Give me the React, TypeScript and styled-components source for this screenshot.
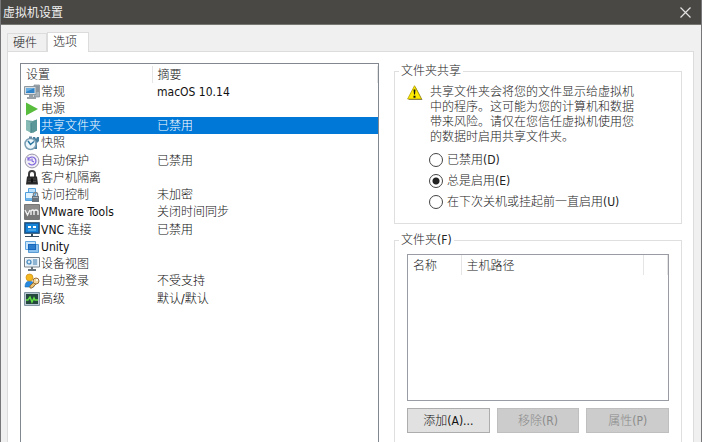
import React from "react";
import styled, { createGlobalStyle } from "styled-components";

const GlobalStyle = createGlobalStyle`
  * { box-sizing: border-box; }
  body {
    margin: 0;
    overflow: hidden;
    background: #f0f0f0;
    color: #222;
    font-family: "DejaVu Sans Condensed", "Noto Sans CJK SC", sans-serif;
    font-size: 12px;
    font-weight: 300;
    line-height: 16px;
  }
  button, input { font: inherit; }
`;

const Window = styled.div`
  display: flex;
  flex-direction: column;
  height: 100vh;
  border: 0 solid #77777a;
  border-right-width: 1px;
  border-left-width: 1px;
  overflow: hidden;
`;

const TitleBar = styled.header`
  display: flex;
  flex: none;
  align-items: center;
  justify-content: space-between;
  height: 25px;
  margin: 0 -1px;
  padding: 1px 10px 0 3px;
  border-bottom: 1px solid #777672;
  background: #4a4845;
  color: #f0f0f0;
`;

const Title = styled.h1`
  margin: 0;
  font-size: 12px;
  font-weight: 400;
`;

const CloseButton = styled.button`
  display: flex;
  padding: 0;
  border: 0;
  background: none;
  color: #e2e2e2;
`;

const Content = styled.main`
  display: flex;
  flex: 1;
  flex-direction: column;
  min-height: 0;
  padding: 7px 7px 0 6px;
`;

const TabList = styled.div`
  display: flex;
  flex: none;
  align-items: flex-end;
  height: 20px;
  margin-bottom: -1px;
  z-index: 1;
`;

const Tab = styled.button<{ $active?: boolean }>`
  height: ${(p) => (p.$active ? 20 : 18)}px;
  width: ${(p) => (p.$active ? 42 : 40)}px;
  margin-bottom: ${(p) => (p.$active ? 0 : 1)}px;
  padding: 0 0 ${(p) => (p.$active ? 2 : 0)}px 5px;
  border: 1px solid #dcdcdc;
  border-bottom: 0;
  background: ${(p) => (p.$active ? "#fff" : "#f0f0f0")};
  color: #222;
  line-height: 16px;
  text-align: left;
`;

const TabPanel = styled.section`
  display: grid;
  flex: 1;
  grid-template-columns: 359fr 288fr;
  column-gap: 15px;
  min-height: 0;
  padding: 11px 11px 0 12px;
  border: 1px solid #dcdcdc;
  border-bottom: 0;
  background: #fff;
`;

const ListBox = styled.div`
  border: 1px solid #828790;
  border-bottom: 0;
  padding: 2px 0 0 3px;
`;

const Table = styled.table`
  width: 100%;
  border-collapse: collapse;
  table-layout: fixed;
`;

const IconCol = styled.col`
  width: 16px;
`;

const NameCol = styled.col`
  width: 112px;
`;

const Heading = styled.th<{ $inset: number; $tall?: boolean }>`
  height: ${(p) => (p.$tall ? 20 : 17)}px;
  padding: ${(p) => (p.$tall ? 2 : 0)}px 0 0 ${(p) => p.$inset}px;
  border-right: 1px solid #e5e5e5;
  font-weight: 300;
  text-align: left;
`;

const SettingRow = styled.tr<{ $selected?: boolean }>`
  height: 17px;
  &:nth-child(4n) { height: 18px; }
  td:not(:first-child) {
    background: ${(p) => (p.$selected ? "#0078d7" : "transparent")};
    color: ${(p) => (p.$selected ? "#fff" : "#111")};
  }
`;

const Cell = styled.td<{ $inset?: number }>`
  padding: 0 0 0 ${(p) => p.$inset ?? 0}px;
  line-height: 16px;
  white-space: nowrap;
`;

const Icon = styled.svg`
  display: block;
  width: 16px;
  height: 16px;
`;

const Side = styled.div`
  display: flex;
  flex-direction: column;
  gap: 8px;
  min-height: 0;
  overflow: hidden;
`;

const Group = styled.fieldset<{ $fill?: boolean }>`
  flex: ${(p) => (p.$fill ? "1" : "none")};
  min-width: 0;
  margin: 0;
  padding: 6px 12px ${(p) => (p.$fill ? 0 : 13)}px;
  border: 1px solid #dfdfdf;
  border-bottom-width: ${(p) => (p.$fill ? 0 : 1)}px;
`;

const Legend = styled.legend`
  margin-left: -8px;
  padding: 0 2px;
`;

const Notice = styled.div`
  display: flex;
  gap: 7px;
  margin-right: 35px;
`;

const WarningIcon = styled(Icon)`
  flex: none;
`;

const NoticeText = styled.p`
  margin: 0;
  line-height: 15px;
`;

const RadioList = styled.div`
  display: flex;
  flex-direction: column;
  gap: 5px;
  margin: 7px 0 0 22px;
`;

const RadioLabel = styled.label`
  display: flex;
  align-items: center;
  gap: 4px;
`;

const Radio = styled.input`
  appearance: none;
  width: 14px;
  height: 14px;
  margin: 0;
  border: 1px solid #444;
  border-radius: 50%;
  background: #fff;
  &:checked {
    background: radial-gradient(circle, #222 3px, #fff 4px);
  }
`;

const FolderBox = styled.div`
  height: 147px;
  border: 1px solid #9a9ca3;
`;

const FolderNameCol = styled.col`
  width: 53px;
`;

const SpareCol = styled.col`
  width: 24px;
`;

const ButtonRow = styled.div`
  display: grid;
  grid-template-columns: repeat(3, 1fr);
  gap: 7px;
  margin-top: 7px;
`;

const PushButton = styled.button`
  height: 25px;
  padding: 0;
  border: 1px solid #adadad;
  background: #e1e1e1;
  color: #111;
  &:disabled {
    border-color: #bfbfbf;
    background: #ccc;
    color: #8a8a8a;
  }
`;

const icons: Record<string, React.ReactNode> = {
  general: (
    <>
      <path d="M10 1h5.500v12H10z" fill="#aab2ba" stroke="#7d858c" strokeWidth=".7" />
      <path d="M11 3h4M11 5h4M11 7h4" stroke="#626c75" strokeWidth=".8" />
      <path d="M.5 2.500h11.500v8H.5z" fill="#d7dde2" stroke="#8e999f" />
      <path d="M2 4h8.500v5H2z" fill="#2f83c9" />
      <path d="M2 4h8.500L2 8z" fill="#68aee0" />
      <path d="M5 11h4v2h3v2H3v-2h2z" fill="#989fa5" />
    </>
  ),
  power: <path d="M2 1.500 14 8 2 14.500z" fill="#58bd3d" />,
  folder: (
    <>
      <path d="m2 2 7 1 4-1.500v11L9 15 2 12z" fill="#6fa7a6" />
      <path d="m2 2 5 3v10l-5-3z" fill="#87bbb5" />
      <path d="m7 5 2-2 4-1.500v11L7 15z" fill="#5b9698" />
      <path d="M7 5v10" stroke="#47838a" />
    </>
  ),
  snapshot: (
    <>
      <path d="M9 2h2l1 2 1-2h2v4l-2 2v6h-3V8L8 6z" fill="#477f9e" />
      <circle cx="6.500" cy="9" r="5.500" fill="#edf6fb" stroke="#7a9eb3" strokeWidth="1.500" />
      <path d="m4 6 2.500 3.500L10 6.500" fill="none" stroke="#28759f" strokeWidth="1.500" />
      <path d="M5 1.500h3v2H5z" fill="#6688a0" />
    </>
  ),
  autoprotect: (
    <>
      <circle cx="8" cy="8" r="6.900" fill="#f0eff6" stroke="#9994a9" />
      <path d="M4.500 6A4 4 0 1 1 4.500 10M4 4v3h3M8 5.500V8l2 1" fill="none" stroke="#8065dc" strokeWidth="1.200" />
    </>
  ),
  isolation: (
    <>
      <path d="M5 7V4a3 3 0 0 1 6 0v3" fill="none" stroke="#3c3c3c" strokeWidth="2" />
      <path d="M3 6.500h10l1 8H2z" fill="#292929" />
      <path d="M4 9h8M4 11.500h8" stroke="#555" strokeWidth=".7" />
      <path d="M7 8.500h2v4H7z" fill="#111" />
    </>
  ),
  access: (
    <>
      <path d="M4.500 1.500h7v7h-7z" fill="#bce0fa" stroke="#55a2df" />
      <path d="M1.500 5.500h8v8h-8z" fill="#e1f3ff" stroke="#4f9edb" />
      <path d="M2 11h7v2H2z" fill="#6bb3e8" />
      <path d="M9.500 9V7.500a2 2 0 0 1 4 0V9" fill="none" stroke="#7c8790" strokeWidth="1.500" />
      <path d="M8 9h7v6H8z" fill="#69747e" />
      <path d="M9 10h5v1H9z" fill="#a3adb4" />
    </>
  ),
  vmware: (
    <>
      <rect width="16" height="16" rx="1" fill="#777" />
      <path d="M1 1h14v5q-7 0-14 3z" fill="#8c8c8c" />
      <path d="m1 6 2.500 5L6 6M7 11V7q2-2 3 0v4m0-4q2-2 4 0v4" fill="none" stroke="#f1f1f1" strokeWidth="1.400" />
    </>
  ),
  vnc: (
    <>
      <path d="M.5.5h15v11H.5z" fill="#135ca3" stroke="#436884" />
      <path d="M2 2h12v8H2z" fill="#1684d7" />
      <path d="M4 4h3v2H4zm5 0h3v2H9z" fill="#fff" />
      <path d="M4 8h8" stroke="#76c1f1" />
      <path d="M7 12h2v2h6v1H1v-1h6z" fill="#394c5b" />
    </>
  ),
  unity: (
    <>
      <path d="M1.500 2.500h10v8h-10z" fill="#c7e3fa" stroke="#62a5df" />
      <path d="M4.500 5.500h10v8h-10z" fill="#8fc3ef" stroke="#5a9bd3" />
      <path d="M4 5h8v6H4z" fill="#1765bd" />
      <path d="M5 6h6v4H5z" fill="#2b7dcc" />
    </>
  ),
  device: (
    <>
      <path d="M.5 1.500h15v9.500H.5z" fill="#f4f7fa" stroke="#77818a" />
      <path d="M2 3h12v6.500H2z" fill="#d9e9f6" />
      <circle cx="5" cy="6" r="2" fill="none" stroke="#4185ba" strokeWidth="1.200" />
      <path d="M9 4h4M9 6h4M9 8h4" stroke="#4780ae" />
      <path d="M7 11h2v2h3v2H4v-2h3z" fill="#65717b" />
    </>
  ),
  login: (
    <>
      <path d="M1 14q0-6 4.500-6 4.500 0 4.500 6z" fill="#2689df" stroke="#176bae" strokeWidth=".6" />
      <circle cx="5.500" cy="4.500" r="3.500" fill="#f5b91f" stroke="#c48b18" strokeWidth=".7" />
      <path d="m10 9-4 4v2h2l4-4" fill="#e9c477" stroke="#9c7138" />
      <circle cx="12" cy="8" r="3" fill="#f3d69b" stroke="#9c7138" />
      <circle cx="13" cy="7" r="1" fill="#fff" />
    </>
  ),
  advanced: (
    <>
      <path d="M.5 1.500h15v13H.5z" fill="#b7c6d0" stroke="#8295a3" />
      <path d="M2 3h12v10H2z" fill="#24483d" />
      <path d="M2 9h2l2-3 2 5 2-4 1 2h3" fill="none" stroke="#61de44" strokeWidth="1.500" />
    </>
  ),
};

const settings = [
  { icon: "general", name: "常规", summary: "macOS 10.14" },
  { icon: "power", name: "电源", summary: "" },
  { icon: "folder", name: "共享文件夹", summary: "已禁用", selected: true },
  { icon: "snapshot", name: "快照", summary: "" },
  { icon: "autoprotect", name: "自动保护", summary: "已禁用" },
  { icon: "isolation", name: "客户机隔离", summary: "" },
  { icon: "access", name: "访问控制", summary: "未加密" },
  { icon: "vmware", name: "VMware Tools", summary: "关闭时间同步" },
  { icon: "vnc", name: "VNC 连接", summary: "已禁用" },
  { icon: "unity", name: "Unity", summary: "" },
  { icon: "device", name: "设备视图", summary: "" },
  { icon: "login", name: "自动登录", summary: "不受支持" },
  { icon: "advanced", name: "高级", summary: "默认/默认" },
];

const sharingOptions = ["已禁用(D)", "总是启用(E)", "在下次关机或挂起前一直启用(U)"];

export default function App() {
  const [sharing, setSharing] = React.useState(1);
  return (
    <Window>
      <GlobalStyle />
      <TitleBar>
        <Title>虚拟机设置</Title>
        <CloseButton aria-label="关闭">
          <svg width="13" height="13" viewBox="0 0 13 13">
            <path d="m1.500 1.500 10 10m0-10-10 10" stroke="currentColor" strokeWidth="1.200" />
          </svg>
        </CloseButton>
      </TitleBar>
      <Content>
        <TabList role="tablist">
          <Tab role="tab" aria-selected={false}>硬件</Tab>
          <Tab role="tab" aria-selected $active>选项</Tab>
        </TabList>
        <TabPanel role="tabpanel">
          <ListBox>
            <Table>
              <colgroup>
                <IconCol />
                <NameCol />
                <col />
              </colgroup>
              <thead>
                <tr>
                  <Heading colSpan={2} $inset={2}>设置</Heading>
                  <Heading $inset={5}>摘要</Heading>
                </tr>
              </thead>
              <tbody>
                {settings.map((s) => (
                  <SettingRow key={s.name} $selected={s.selected}>
                    <Cell>
                      <Icon viewBox="0 0 16 16" aria-hidden="true">{icons[s.icon]}</Icon>
                    </Cell>
                    <Cell $inset={1}>{s.name}</Cell>
                    <Cell $inset={5}>{s.summary}</Cell>
                  </SettingRow>
                ))}
              </tbody>
            </Table>
          </ListBox>
          <Side>
            <Group>
              <Legend>文件夹共享</Legend>
              <Notice>
                <WarningIcon viewBox="0 0 16 16" aria-hidden="true">
                  <path d="M8.500 1.500 15.500 15h-14z" fill="#777" />
                  <path d="M7.500.7 14.500 14H.6z" fill="#ffeb00" stroke="#b3a000" strokeWidth=".8" strokeLinejoin="round" />
                  <path d="M6.500 4.500h2L8 9.500H7zM6.500 10.800h2v2h-2z" fill="#111" />
                </WarningIcon>
                <NoticeText>
                  共享文件夹会将您的文件显示给虚拟机中的程序。这可能为您的计算机和数据带来风险。请仅在您信任虚拟机使用您的数据时启用共享文件夹。
                </NoticeText>
              </Notice>
              <RadioList role="radiogroup" aria-label="文件夹共享">
                {sharingOptions.map((label, i) => (
                  <RadioLabel key={label}>
                    <Radio type="radio" name="sharing" checked={sharing === i} onChange={() => setSharing(i)} />
                    {label}
                  </RadioLabel>
                ))}
              </RadioList>
            </Group>
            <Group $fill>
              <Legend>文件夹(F)</Legend>
              <FolderBox>
                <Table>
                  <colgroup>
                    <FolderNameCol />
                    <col />
                    <SpareCol />
                  </colgroup>
                  <thead>
                    <tr>
                      <Heading $inset={5} $tall>名称</Heading>
                      <Heading $inset={5} $tall>主机路径</Heading>
                      <Heading $inset={0} $tall />
                    </tr>
                  </thead>
                </Table>
              </FolderBox>
              <ButtonRow>
                <PushButton>添加(A)...</PushButton>
                <PushButton disabled>移除(R)</PushButton>
                <PushButton disabled>属性(P)</PushButton>
              </ButtonRow>
            </Group>
          </Side>
        </TabPanel>
      </Content>
    </Window>
  );
}
